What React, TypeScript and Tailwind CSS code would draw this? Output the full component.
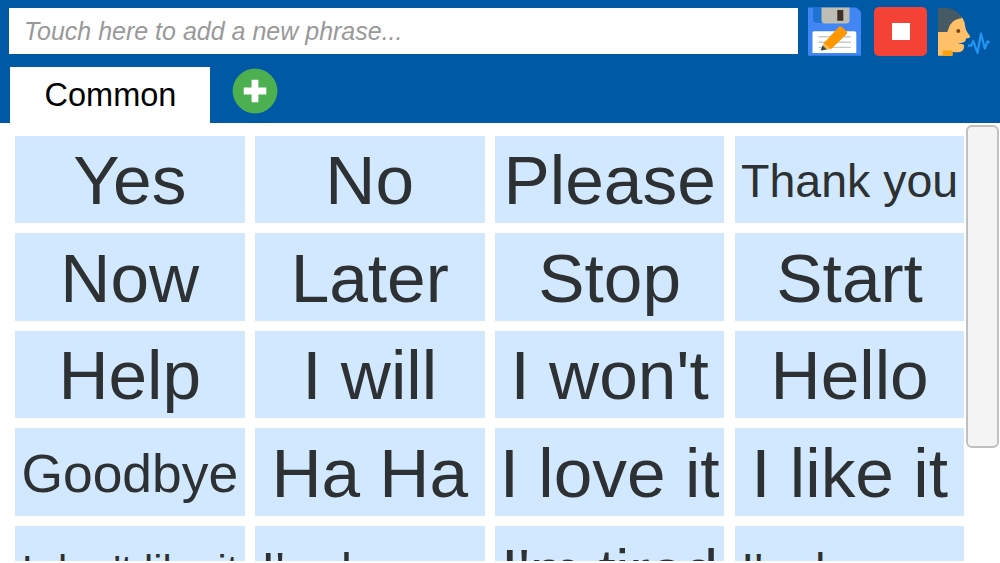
type Phrase = { text: string; size: string }

const phrases: Phrase[] = [
  { text: 'Yes', size: 'text-[69.4px]' },
  { text: 'No', size: 'text-[69.4px]' },
  { text: 'Please', size: 'text-[69.4px]' },
  { text: 'Thank you', size: 'text-[46.5px]' },
  { text: 'Now', size: 'text-[69.4px]' },
  { text: 'Later', size: 'text-[69.4px]' },
  { text: 'Stop', size: 'text-[69.4px]' },
  { text: 'Start', size: 'text-[69.4px]' },
  { text: 'Help', size: 'text-[69.4px]' },
  { text: 'I will', size: 'text-[69.4px]' },
  { text: "I won't", size: 'text-[69.4px]' },
  { text: 'Hello', size: 'text-[69.4px]' },
  { text: 'Goodbye', size: 'text-[53.4px]' },
  { text: 'Ha Ha', size: 'text-[69.4px]' },
  { text: 'I love it', size: 'text-[69.4px]' },
  { text: 'I like it', size: 'text-[69.4px]' },
  { text: "I don't like it", size: 'text-[41.3px]' },
  { text: "I'm happy", size: 'text-[50.4px]' },
  { text: "I'm tired", size: 'text-[61.5px]' },
  { text: "I'm hungry", size: 'text-[46.7px]' },
]

function SaveIcon() {
  return (
    <svg viewBox="0 0 54 49" className="h-[49px] w-[54px]">
      <path d="M0 .5H48.5L53 5V48.7H0Z" fill="#4285f4" />
      <path d="M5 .5H14V16H9Q5 16 5 12Z" fill="#1f73d3" />
      <path d="M13.5 .5H41.5V13Q41.5 16.5 38 16.5H17Q13.5 16.5 13.5 13Z" fill="#bdbdb3" />
      <rect x="29.3" y="3" width="6" height="10.8" fill="#3e2f28" />
      <path d="M4.5 26Q4.5 24.3 6.2 24.3H46.5Q48.3 24.3 48.3 26V46H4.5Z" fill="#fff" />
      <path d="M10.5 29.8H43M10.5 35.2H43M10.5 40.4H43" stroke="#c6c8ca" strokeWidth="1.4" />
      <path d="M15.5 36.5L30.5 20.2Q32 18.5 33.7 19.9L38.6 24.2Q40 25.5 38.7 27.1L23.2 42Z" fill="#ff9800" />
      <path d="M15.5 36.5L23.2 42L13 43.4Z" fill="#f5b64c" />
      <path d="M14.6 38.5L18.6 42.4L12.6 43.4Z" fill="#37474f" />
    </svg>
  )
}

function SpeakIcon() {
  return (
    <svg viewBox="0 0 54 49" className="h-[49px] w-[54px]">
      <path
        d="M0 20L17 6L24 10Q27.3 15 27.4 20.5Q27.7 23 29.5 25.5L31.8 28.8Q32.7 30.7 30.8 31L28 31.5L27.5 33.7Q26.5 36 19.5 36.2L25 37.2Q26.8 38.3 25.8 41.5Q24.5 45.3 20 45.3Q17 45.3 14.5 44.7V48.7H0Z"
        fill="#ffc069"
      />
      <path d="M4.8 43.5H14.5V48.7H4.8Z" fill="#ff9f0a" />
      <path d="M0 1H9Q18.5 1.5 24.5 11Q18.5 11.5 15 14.5Q11.7 17.5 10.8 21L9.3 25H0Z" fill="#455a64" />
      <circle cx="20.3" cy="24" r="2" fill="#784719" />
      <path
        d="M30 38.7H33.3L35.3 34L39.5 46L43 26.5L46.8 41.5L49.5 34.5L51.5 35.5"
        fill="none"
        stroke="#2196f3"
        strokeWidth="2.2"
        strokeLinejoin="round"
      />
    </svg>
  )
}

function AddIcon() {
  return (
    <svg viewBox="0 0 46 46" className="h-[46px] w-[46px]">
      <circle cx="23" cy="23" r="22.4" fill="#4caf50" />
      <path d="M23 11.8V34.3M11.7 23H34.3" stroke="#fff" strokeWidth="6.8" />
    </svg>
  )
}

export default function App() {
  return (
    <div className="h-[563px] w-[1000px] overflow-hidden bg-white font-['Liberation_Sans',Arial,sans-serif]">
      <header className="h-[123px] bg-[#0059a5]">
        <div className="flex h-[67px] items-start pl-[9px] pt-[7px]">
          <input
            type="text"
            placeholder="Touch here to add a new phrase..."
            className="mt-[1.4px] h-[46px] w-[789px] bg-white px-[15px] text-[25px] italic text-gray-800 outline-none placeholder:text-[#999999] placeholder:opacity-100"
          />
          <button className="ml-2.5" aria-label="Save">
            <SaveIcon />
          </button>
          <button
            aria-label="Stop"
            className="ml-3 flex h-[49px] w-[53px] items-center justify-center rounded-[5px] bg-[#f44336]"
          >
            <span className="h-[17px] w-[18px] bg-white" />
          </button>
          <button className="ml-[11px]" aria-label="Speak">
            <SpeakIcon />
          </button>
        </div>
        <nav className="flex h-14 pl-2.5">
          <button className="h-14 w-[200px] bg-white pl-px text-[32.5px] leading-[56px] text-black">Common</button>
          <button className="ml-[22.4px] mt-[1.3px] h-[46px]" aria-label="Add category">
            <AddIcon />
          </button>
        </nav>
      </header>

      <main className="flex h-[438px] overflow-hidden">
        <div className="ml-[15px] mt-[13px] grid w-[949.4px] shrink-0 auto-rows-[87.4px] grid-cols-4 gap-x-[10.4px] gap-y-2.5">
          {phrases.map(({ text, size }) => (
            <button key={text} className="flex items-center justify-center bg-[#d2e8ff] pt-[3px] text-[#2d3133]">
              <span className={`${size} whitespace-nowrap leading-none`}>{text}</span>
            </button>
          ))}
        </div>
        <div className="ml-[1.6px] mt-[1.5px] h-[323.5px] w-[33px] shrink-0 rounded-md border-2 border-[#c0c0c2] bg-[#f4f4f5]" />
      </main>
    </div>
  )
}
